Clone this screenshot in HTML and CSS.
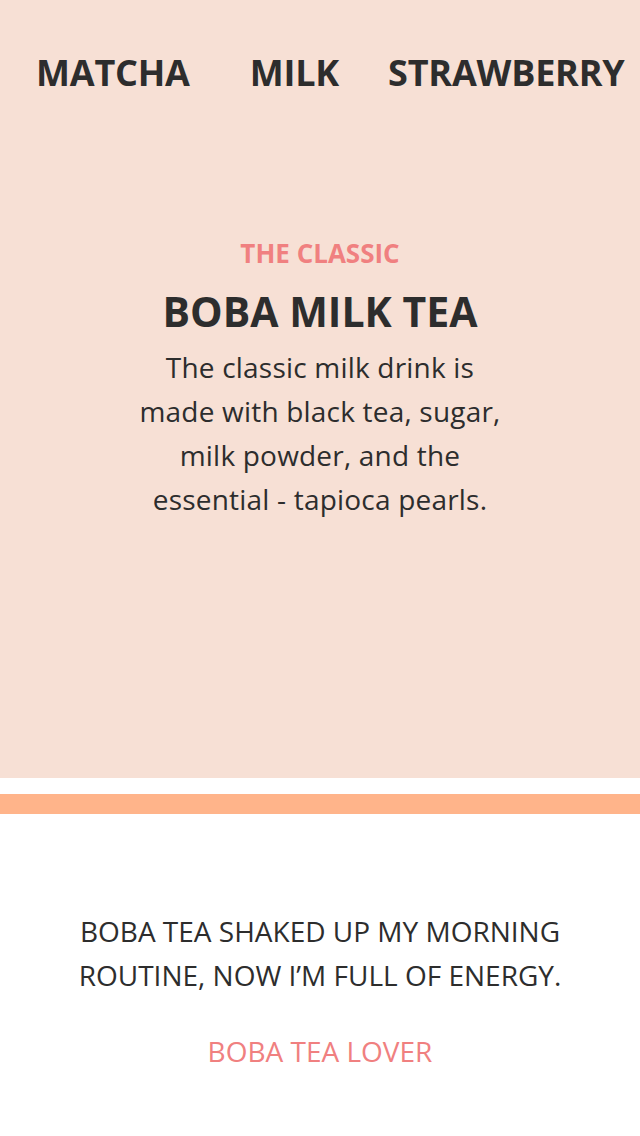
FILE: index.html
```html
<!DOCTYPE html>
<html lang="en">
<head>
<meta charset="utf-8">
<title>Boba Tea</title>
<link rel="stylesheet" href="styles.css">
</head>
<body>
<header class="hero">
  <nav class="nav">
    <a class="nav-link" href="#">MATCHA</a>
    <a class="nav-link" href="#">MILK</a>
    <a class="nav-link" href="#">STRAWBERRY</a>
  </nav>
  <div class="feature">
    <p class="eyebrow">THE CLASSIC</p>
    <h1 class="title">BOBA MILK TEA</h1>
    <p class="desc">The classic milk drink is made with black tea, sugar, milk powder, and the essential - tapioca pearls.</p>
  </div>
</header>
<div class="stripe"></div>
<section class="quote">
  <p class="quote-text">BOBA TEA SHAKED UP MY MORNING ROUTINE, NOW I’M FULL OF ENERGY.</p>
  <p class="quote-author">BOBA TEA LOVER</p>
</section>
</body>
</html>
```

FILE: styles.css
```css
* { box-sizing: border-box; }
html, body { margin: 0; padding: 0; background: #ffffff; }
body { font-family: "Open Sans", "Noto Sans", sans-serif; color: #2d2d2d; }

.hero {
  background: #f7e0d5;
  height: 778px;
  display: flex;
  flex-direction: column;
}
.nav {
  display: flex;
  padding: 50px 0 0 36px;
  gap: 49px;
}
.nav-link {
  color: #2d2d2d;
  text-decoration: none;
  font-weight: 700;
  font-size: 36px;
  line-height: 46px;
  letter-spacing: -0.2px;
}
.nav-link:first-child {
  margin-right: 11px;
}
.feature {
  margin-top: 141px;
  display: flex;
  flex-direction: column;
  align-items: center;
  text-align: center;
}
.eyebrow {
  margin: 0;
  color: #f08080;
  font-weight: 700;
  font-size: 26px;
  line-height: 32px;
}
.title {
  margin: 14px 0 0;
  font-weight: 700;
  font-size: 41px;
  line-height: 56px;
}
.desc {
  margin: 6px 0 0;
  width: 380px;
  font-size: 28px;
  line-height: 44px;
  letter-spacing: 0.2px;
}
.stripe {
  margin-top: 16px;
  height: 20px;
  background: #ffb48a;
}
.quote {
  padding: 95px 40px 0;
  text-align: center;
}
.quote-text {
  margin: 0;
  font-size: 28px;
  line-height: 44px;
}
.quote-author {
  margin: 32px 0 0;
  color: #f08080;
  font-size: 28px;
  line-height: 44px;
}
```
